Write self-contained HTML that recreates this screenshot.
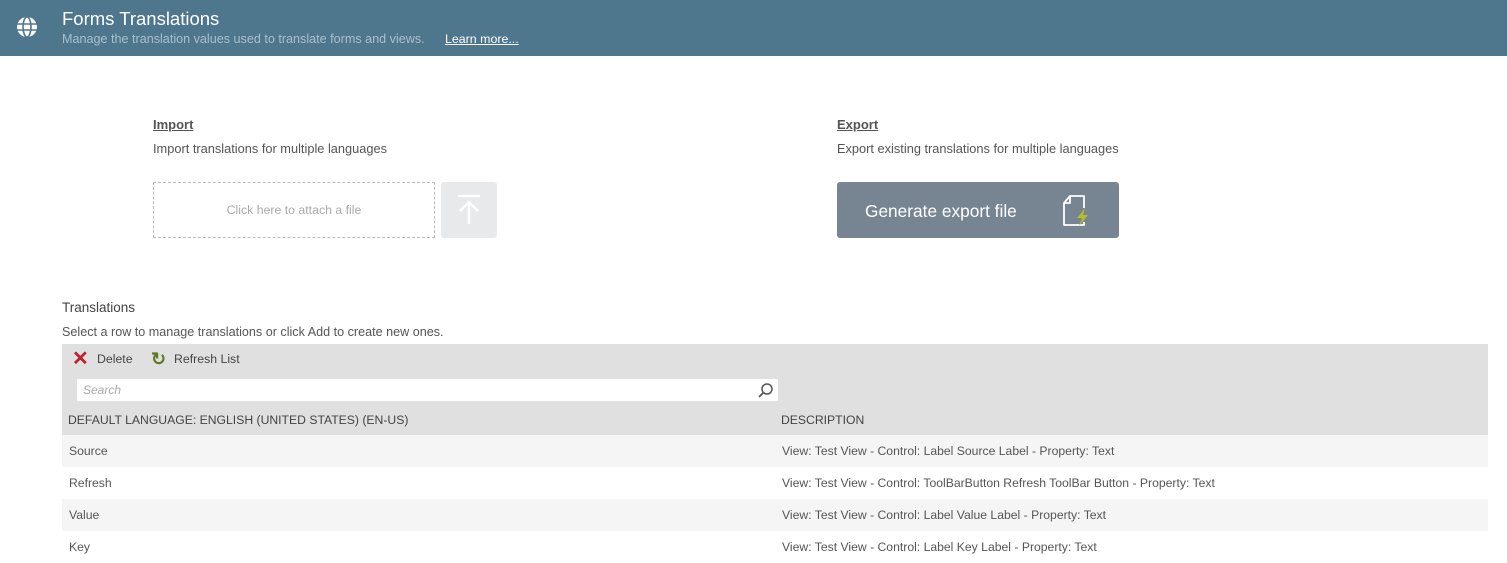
<!DOCTYPE html>
<html><head><style>
*{box-sizing:border-box;margin:0;padding:0}
body{width:1507px;height:562px;overflow:hidden;background:#fff;font-family:"Liberation Sans",sans-serif;color:#555;position:relative;font-size:12px}
.hdr{position:absolute;left:0;top:0;width:1507px;height:56px;background:#4e768d}
.abs{position:absolute}
.row{position:absolute;left:62px;width:1426px;height:32px;line-height:32px;font-size:12.2px;color:#555}
.row span{position:absolute}
</style></head><body>
<div class="hdr">
<svg class="abs" style="left:16px;top:16px" width="22" height="22" viewBox="0 0 22 22"><circle cx="11" cy="11" r="10" fill="#fff"/><g stroke="#4e768d" stroke-width="1.6" fill="none"><line x1="1" y1="8" x2="21" y2="8"/><line x1="1" y1="14" x2="21" y2="14"/><ellipse cx="11" cy="11" rx="4" ry="10"/></g></svg>
<div class="abs" style="left:62px;top:8px;font-size:18.5px;color:#fff">Forms Translations</div>
<div class="abs" style="left:62px;top:32px;font-size:12.6px;color:#a9c0cd">Manage the translation values used to translate forms and views.</div>
<div class="abs" style="left:445px;top:32px;font-size:12.4px;color:#fff;text-decoration:underline">Learn more...</div>
</div>
<div class="abs" style="left:153px;top:117px;font-size:13px;font-weight:bold;color:#555;text-decoration:underline">Import</div>
<div class="abs" style="left:153px;top:141px;font-size:12.8px">Import translations for multiple languages</div>
<div class="abs" style="left:153px;top:182px;width:282px;height:56px;border:1px dashed #bbb;text-align:center;line-height:54px;color:#aaa;font-size:12.3px">Click here to attach a file</div>
<div class="abs" style="left:441px;top:182px;width:56px;height:56px;background:#e8e9eb;border-radius:3px"><svg width="56" height="56"><g stroke="#fff" stroke-width="2.5" fill="none"><line x1="17" y1="14" x2="39" y2="14"/><line x1="28" y1="20" x2="28" y2="42"/><polyline points="19,29 28,20 37,29"/></g></svg></div>
<div class="abs" style="left:837px;top:117px;font-size:13px;font-weight:bold;text-decoration:underline">Export</div>
<div class="abs" style="left:837px;top:141px;font-size:12.8px">Export existing translations for multiple languages</div>
<div class="abs" style="left:837px;top:182px;width:282px;height:56px;background:#778593;border-radius:3px;color:#fff;font-size:17.3px;line-height:58px;padding-left:28px">Generate export file
<svg class="abs" style="left:224px;top:12px" width="30" height="34" viewBox="0 0 30 34"><path d="M9 2H23V14M23 28V31H3V9L9 2V9H3" stroke="#fff" stroke-width="1.8" fill="none" stroke-linejoin="round"/><path d="M24 14L16 24H21L18 32L27 21H22Z" fill="#b5bd2c"/></svg></div>
<div class="abs" style="left:62px;top:300px;font-size:13.5px;color:#444">Translations</div>
<div class="abs" style="left:62px;top:325px;font-size:12.6px;color:#555">Select a row to manage translations or click Add to create new ones.</div>
<div class="abs" style="left:62px;top:344px;width:1426px;height:91px;background:#e0e0e0"></div>
<div class="abs" style="left:72px;top:350px;color:#c0202a;font-size:20px;line-height:18px;font-weight:bold">✕</div>
<div class="abs" style="left:97px;top:352px;font-size:12.3px;color:#444">Delete</div>
<div class="abs" style="left:151px;top:349px;color:#5f7a22;font-size:18px;line-height:20px;font-weight:bold">↻</div>
<div class="abs" style="left:174px;top:352px;font-size:12.3px;color:#444">Refresh List</div>
<div class="abs" style="left:77px;top:379px;width:701px;height:22px;background:#fff;padding-left:6px;line-height:22px;color:#aaa;font-style:italic;font-size:12px">Search
<svg class="abs" style="left:680px;top:3px" width="17" height="17"><circle cx="10" cy="7" r="5" stroke="#555" stroke-width="1.5" fill="none"/><line x1="6" y1="11" x2="2" y2="15" stroke="#555" stroke-width="1.8"/></svg></div>
<div class="row" style="top:405px;height:30px;line-height:30px;color:#444"><span style="left:6px">DEFAULT LANGUAGE: ENGLISH (UNITED STATES) (EN-US)</span><span style="left:719px">DESCRIPTION</span></div>
<div class="row" style="top:435px;background:#f5f5f5"><span style="left:7px">Source</span><span style="left:720px">View: Test View - Control: Label Source Label - Property: Text</span></div>
<div class="row" style="top:467px"><span style="left:7px">Refresh</span><span style="left:720px">View: Test View - Control: ToolBarButton Refresh ToolBar Button - Property: Text</span></div>
<div class="row" style="top:499px;background:#f5f5f5"><span style="left:7px">Value</span><span style="left:720px">View: Test View - Control: Label Value Label - Property: Text</span></div>
<div class="row" style="top:531px"><span style="left:7px">Key</span><span style="left:720px">View: Test View - Control: Label Key Label - Property: Text</span></div>
</body></html>
